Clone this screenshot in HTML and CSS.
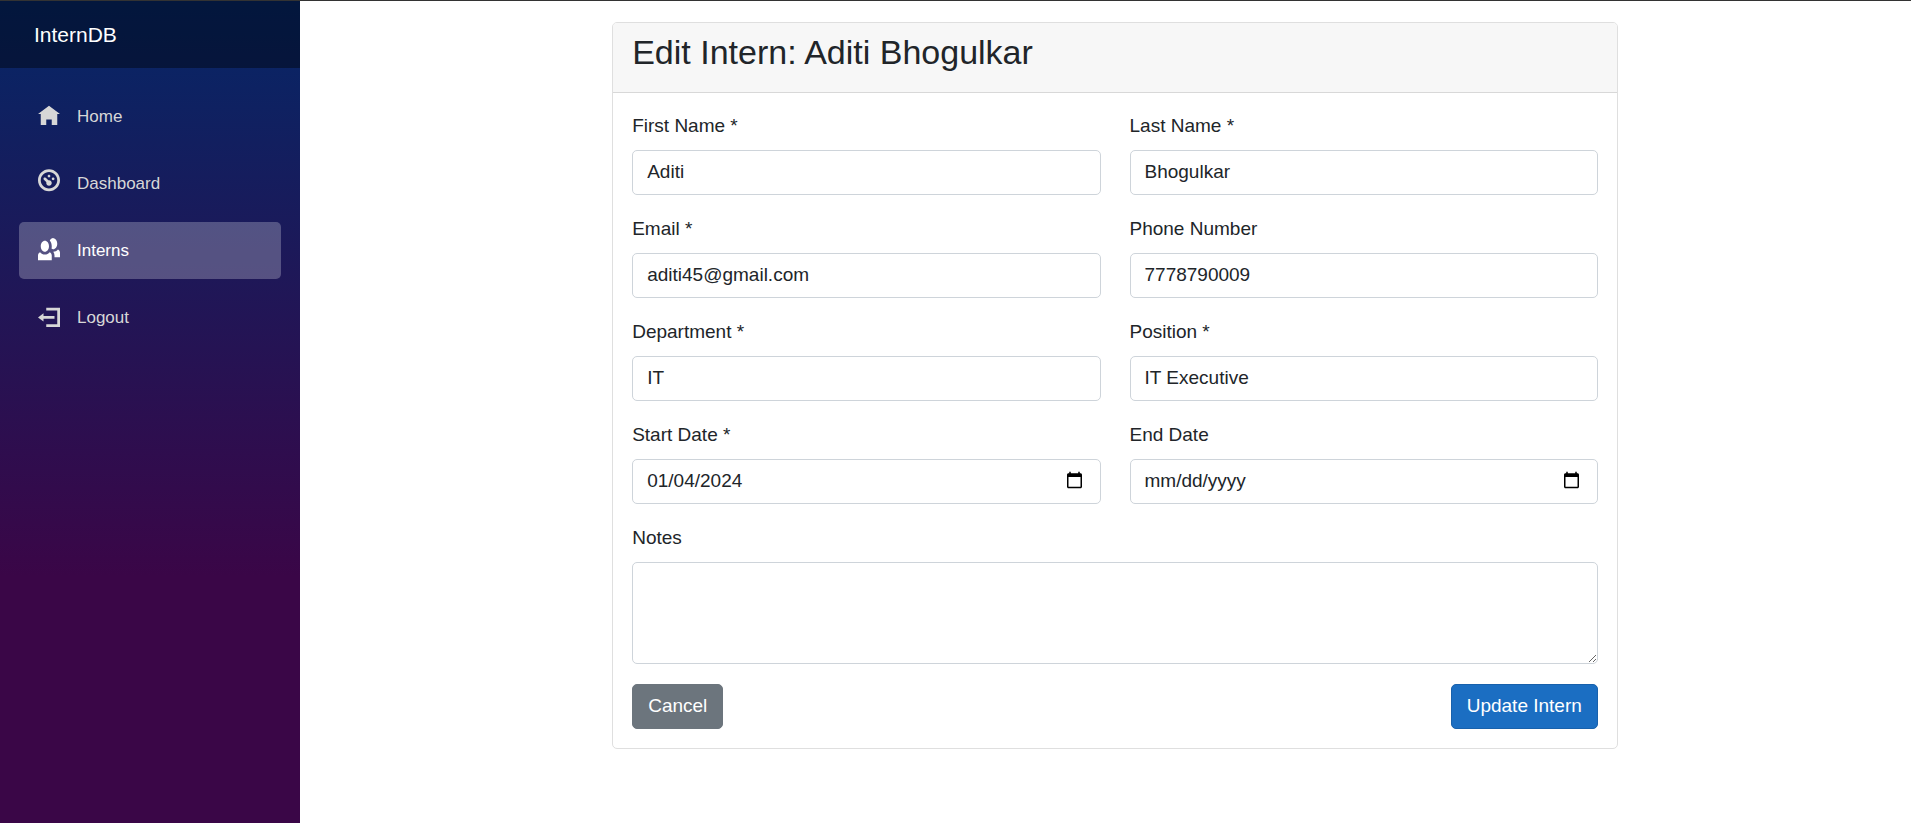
FILE: index.html
```html
<!DOCTYPE html>
<html lang="en-US">
<head>
<meta charset="utf-8">
<meta name="viewport" content="width=device-width, initial-scale=1">
<title>Edit Intern</title>
<link rel="stylesheet" href="styles.css">
</head>
<body>
<div class="page">
  <aside class="sidebar">
    <div class="top-row"><a class="brand" href="#">InternDB</a></div>
    <nav class="nav">
      <a class="nav-link" href="#"><svg class="icon" viewBox="0 -1 8 8" aria-hidden="true"><path d="M4 0l-4 3h1v4h2v-2h2v2h2v-4.030l1 .03-4-3z"/></svg>Home</a>
      <a class="nav-link" href="#"><svg class="icon" viewBox="0 0.3 8 8" aria-hidden="true"><path d="M4 0c-2.200 0-4 1.800-4 4s1.800 4 4 4 4-1.800 4-4-1.800-4-4-4zm0 1c1.660 0 3 1.340 3 3s-1.340 3-3 3-3-1.340-3-3 1.340-3 3-3zm0 1c-.28 0-.5.22-.5.5s.22.5.5.5.5-.22.5-.5-.22-.5-.5-.5zm-1.660 1a.5.5 0 0 0-.19.84l.91.91c-.02.08-.06.16-.06.25 0 .55.45 1 1 1s1-.45 1-1-.45-1-1-1c-.09 0-.17.04-.25.06l-.91-.91a.5.5 0 0 0-.44-.16.5.5 0 0 0-.06 0zm3.160 0c-.28 0-.5.22-.5.5s.22.5.5.5.5-.22.5-.5-.22-.5-.5-.5z"/></svg>Dashboard</a>
      <a class="nav-link active" href="#" aria-current="page"><svg class="icon" viewBox="0 -0.4 8 8" aria-hidden="true"><path d="M5.500 0c-.51 0-.95.35-1.220.88.45.54.72 1.280.72 2.130 0 .29-.03.55-.09.81.19.11.38.19.59.19.83 0 1.500-.9 1.500-2 0-1.100-.67-2-1.500-2zm-3 1c-.83 0-1.500.9-1.500 2s.67 2 1.500 2 1.500-.9 1.500-2-.67-2-1.500-2zm4.750 3.160c-.43.51-1.020.82-1.690.84.27.38.44.84.44 1.340v.66h2v-1.660c0-.52-.31-.97-.75-1.190zm-6.500 1c-.44.22-.75.67-.75 1.190v1.660h5v-1.660c0-.52-.31-.97-.75-1.190-.45.53-1.060.84-1.750.84s-1.300-.32-1.750-.84z"/></svg>Interns</a>
      <a class="nav-link" href="#"><svg class="icon" viewBox="0 -1.4 8 8" aria-hidden="true"><path d="M3 0v1h4v5h-4v1h5v-7h-5zm-1 2l-2 1.500 2 1.500v-1h4v-1h-4v-1z"/></svg>Logout</a>
    </nav>
  </aside>
  <main class="content">
    <section class="card">
      <header class="card-header"><h1 class="title">Edit Intern: Aditi Bhogulkar</h1></header>
      <form class="card-body">
        <div class="fields">
          <div class="field"><label for="first">First Name *</label><input class="control" id="first" type="text" value="Aditi"></div>
          <div class="field"><label for="last">Last Name *</label><input class="control" id="last" type="text" value="Bhogulkar"></div>
          <div class="field"><label for="email">Email *</label><input class="control" id="email" type="email" value="aditi45@gmail.com"></div>
          <div class="field"><label for="phone">Phone Number</label><input class="control" id="phone" type="tel" value="7778790009"></div>
          <div class="field"><label for="dept">Department *</label><input class="control" id="dept" type="text" value="IT"></div>
          <div class="field"><label for="position">Position *</label><input class="control" id="position" type="text" value="IT Executive"></div>
          <div class="field"><label for="start">Start Date *</label><input class="control" id="start" type="date" value="2024-01-04"></div>
          <div class="field"><label for="end">End Date</label><input class="control" id="end" type="date"></div>
          <div class="field wide"><label for="notes">Notes</label><textarea class="control notes" id="notes" rows="3"></textarea></div>
        </div>
        <div class="actions">
          <button class="btn cancel" type="button">Cancel</button>
          <button class="btn update" type="submit">Update Intern</button>
        </div>
      </form>
    </section>
  </main>
</div>
</body>
</html>
```
FILE: styles.css
```css
*, *::before, *::after { box-sizing: border-box; }

body {
  margin: 0;
  font: 19px/29px "Liberation Sans", Arial, sans-serif;
  color: #212529;
  background: #fff;
}

.page {
  display: flex;
  min-height: 100vh;
  border-top: 1px solid #333;
}

.sidebar {
  flex: 0 0 300px;
  background: linear-gradient(180deg, #052767 0%, #3a0647 70%);
}

.top-row {
  display: flex;
  align-items: center;
  height: 67px;
  padding: 0 34px;
  background: rgba(0, 0, 0, 0.4);
}

.brand {
  font-size: 21px;
  color: #fff;
  text-decoration: none;
}

.nav {
  display: flex;
  flex-direction: column;
  gap: 10px;
  padding: 20px 19px;
}

.nav-link {
  display: flex;
  align-items: center;
  gap: 17px;
  height: 57px;
  padding: 0 19px;
  border-radius: 5px;
  font-size: 17px;
  color: #d7d7d7;
  text-decoration: none;
}

.nav-link.active {
  background: rgba(255, 255, 255, 0.25);
  color: #fff;
}

.icon {
  width: 22px;
  height: 22px;
  margin-bottom: 6px;
  overflow: visible;
  fill: currentColor;
}

.content {
  flex: 1;
  min-width: 0;
  padding: 21px 20px 21px 39px;
}

.card {
  width: calc(100% * 2 / 3 - 29px);
  margin: 0 auto;
  border: 1px solid #dfdfdf;
  border-radius: 5px;
  background: #fff;
}

.card-header {
  padding: 10px 19px 20px;
  border-bottom: 1px solid #d8d8d8;
  border-radius: 4px 4px 0 0;
  background: #f7f7f7;
}

.title {
  margin: 0;
  font-size: 34px;
  font-weight: 400;
  line-height: 39px;
}

.card-body { padding: 18px 19px 19px; }

.fields {
  display: grid;
  grid-template-columns: 1fr 1fr;
  gap: 19px 29px;
}

.field {
  display: flex;
  flex-direction: column;
  gap: 10px;
  min-width: 0;
}

.wide { grid-column: 1 / -1; }

.control {
  width: 100%;
  height: 45px;
  padding: 6px 14px 8px;
  border: 1px solid #ced4da;
  border-radius: 5px;
  font: inherit;
  color: inherit;
  background: #fff;
}

.control::-webkit-datetime-edit-fields-wrapper,
.control::-webkit-datetime-edit-month-field,
.control::-webkit-datetime-edit-day-field,
.control::-webkit-datetime-edit-year-field { padding: 0; }

.notes {
  height: 102px;
  resize: vertical;
}

.actions {
  display: flex;
  justify-content: space-between;
  margin-top: 20px;
}

.btn {
  height: 45px;
  padding: 0 15px 2px;
  border: 1px solid;
  border-radius: 5px;
  font: inherit;
  color: #fff;
}

.cancel {
  background: #6c757d;
  border-color: #6c757d;
}

.update {
  background: #1b6ec2;
  border-color: #1861ac;
}
```
